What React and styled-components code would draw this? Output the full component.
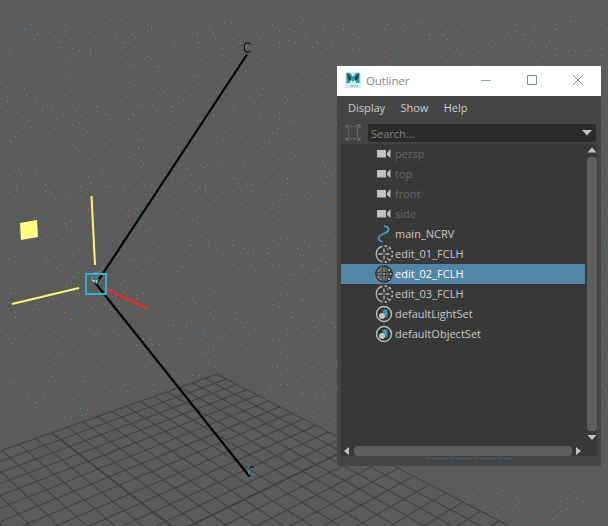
import React from 'react';
import styled, { createGlobalStyle, css } from 'styled-components';

const Global = createGlobalStyle`
  * { box-sizing: border-box; }
  body { margin: 0; background: #5b5b5b; overflow: hidden; }
`;

const Viewport = styled.main`
  position: relative;
  width: 608px;
  height: 526px;
  overflow: hidden;
  background: #5b5b5b;
  font-family: 'Open Sans', 'Noto Sans', sans-serif;
`;

const Scene = styled.svg`
  display: block;
`;

const Window = styled.section`
  position: absolute;
  left: 337px;
  top: 66px;
  width: 264px;
  height: 400px;
  display: flex;
  flex-direction: column;
  background: #444;
`;

const TitleBar = styled.header`
  height: 30px;
  flex: none;
  display: flex;
  align-items: center;
  padding: 0 17px 2px 8px;
  background: #fff;
`;

const Title = styled.h1`
  flex: 1;
  margin: 2px 0 0 5px;
  font-size: 11.5px;
  font-weight: 400;
  line-height: 16px;
  letter-spacing: -0.1px;
  color: #858585;
`;

const WindowButtons = styled.div`
  display: flex;
  gap: 34px;
  svg { display: block; }
`;

const MenuBar = styled.nav`
  height: 28px;
  flex: none;
  display: flex;
  gap: 15.3px;
  padding: 4px 11px 0;
  font-size: 11px;
  line-height: 16px;
  color: #cfcfcf;
`;

const SearchBar = styled.div`
  height: 20px;
  flex: none;
  display: flex;
  align-items: flex-start;
  padding: 0 5px 0 8px;
`;

const SearchField = styled.div`
  flex: 1;
  height: 18px;
  margin-left: 7px;
  padding: 0 3px;
  display: flex;
  align-items: center;
  justify-content: space-between;
  border-radius: 2px;
  background: #2b2b2b;
  color: #858585;
  font-size: 11px;
  line-height: 18px;
  span { padding-top: 2px; }
`;

const Panel = styled.div`
  height: 312px;
  flex: none;
  margin: 0 4px;
  display: grid;
  grid-template-columns: 244px 12px;
  grid-template-rows: 300px 12px;
  background: #383838;
`;

const List = styled.ul`
  margin: 0;
  padding: 0;
  list-style: none;
`;

const Row = styled.li`
  height: 20px;
  display: flex;
  align-items: center;
  padding-left: 34px;
  gap: 2px;
  font-size: 11px;
  line-height: 20px;
  letter-spacing: 0.02px;
  white-space: nowrap;
  color: ${(p) => (p.$dim ? '#686868' : '#c8c8c8')};
  ${(p) => p.$selected && css`
    background: #5285a6;
    color: #fff;
  `}
  svg { flex: none; }
`;

const VerticalScroll = styled.div`
  display: flex;
  flex-direction: column;
  align-items: center;
  padding: 3px 0 0 2px;
  gap: 4px;
`;

const HorizontalScroll = styled.div`
  grid-column: 1 / -1;
  display: flex;
  align-items: center;
  padding: 2px 0 0 3px;
  gap: 4px;
`;

const Thumb = styled.div`
  flex: none;
  width: ${(p) => p.$width}px;
  height: ${(p) => p.$height}px;
  border-radius: 4px;
  background: #5e5e5e;
`;

const Grip = styled.div`
  width: 86px;
  margin: 2px 0 0 89px;
  height: 1px;
  background: repeating-linear-gradient(90deg, #4986ae 0 1px, #444 1px 3px);
`;

const Arrow = ({ points, width, height }) => (
  <svg width={width} height={height} viewBox={`0 0 ${width} ${height}`}>
    <polygon points={points} fill="#bcc7c2" />
  </svg>
);

/* Ground plane in perspective: 24 x 24 cells, heavier lines on both axes. */
const project = (u, v) => {
  const w = 1 - 0.1605 * u - 0.1334 * v;
  return [(217 + 81 * u - 172.2 * v) / w, (374 + 0.25 * u + v) / w];
};

const segment = (a, b) => {
  const [x1, y1] = project(...a);
  const [x2, y2] = project(...b);
  return `M${x1.toFixed(1)} ${y1.toFixed(1)}L${x2.toFixed(1)} ${y2.toFixed(1)}`;
};

const steps = Array.from({ length: 25 }, (_, i) => i).filter((i) => i !== 12);
const gridPath = steps
  .map((i) => segment([i / 12, 0], [i / 12, 2]) + segment([0, i / 12], [2, i / 12]))
  .join('');
const axisPath = segment([1, 0], [1, 2]) + segment([0, 1], [2, 1]);

const speckles = (() => {
  let seed = 41;
  const random = () => {
    seed = (seed * 16807) % 2147483647;
    return seed / 2147483647;
  };
  const paths = ['', '', ''];
  for (let y = 19; y < 522; y += 9) {
    for (let x = 6; x < 602; x += 9) {
      const px = x + Math.floor(random() * 7);
      const py = y + Math.floor(random() * 7);
      const tone = Math.floor(random() * 3);
      const limit = px < 217 ? 372 + (217 - px) * 0.35 : 372 + (px - 217) * 0.52;
      const corner = px > 435 && py > 485 && py < limit + 40;
      if (py < limit - 3 && (py < 445 || corner)) {
        paths[tone] += `M${px} ${py}h1v1h-1z`;
      }
    }
  }
  return paths;
})();

const SceneDrawing = () => (
  <Scene width="608" height="526" viewBox="0 0 608 526">
    <g shapeRendering="crispEdges">
      <path d={speckles[0]} fill="#7f807d" />
      <path d={speckles[1]} fill="#a8744a" />
      <path d={speckles[2]} fill="#448fbb" />
    </g>
    <path d={gridPath} stroke="#424242" strokeWidth="1.1" fill="none" />
    <path d={axisPath} stroke="#404040" strokeWidth="1.8" fill="none" />
    <path d="M247 54.500L96 284L249.500 476.500" stroke="#050505" strokeWidth="2.2" fill="none" />
    <path d="M250 44.500l-1.500-1.500h-2l-2 2v5l2 2h2l1.500-1.500" stroke="#111" strokeWidth="1.3" fill="none" />
    <path d="M250.500 45.500l-2-1.500h-2l-1 1.500v4l2 1.500h2" stroke="#4383a7" strokeWidth=".7" fill="none" />
    <path d="M254 467.500l-3-1-3 2M250 475l2-1" stroke="#151515" strokeWidth="1.2" fill="none" />
    <path d="M249 467l-1 2 2 2-2 2 3 2 4-1" stroke="#4aa9d8" strokeWidth="1.2" strokeDasharray="1 1" fill="none" />
    <path d="M20 223l17-3 1 17-17 3z" fill="#ffff83" />
    <path d="M91.500 196L95 265M12 304L79 288" stroke="#fbf676" strokeWidth="2" fill="none" />
    <path d="M107 289.500L147 308" stroke="#f52822" strokeWidth="2" fill="none" />
    <rect x="86" y="274" width="20" height="20" fill="none" stroke="#30b5d1" strokeWidth="2" />
    <path d="M93 273h6M92 276v4l3 1 3-1-2 4M95 277h3" stroke="#34bbd5" strokeWidth="1.2" fill="none" />
    <path d="M93 280l1 2M97 281l-1 1" stroke="#efe64d" strokeWidth="1.2" />
  </Scene>
);

const MayaLogo = () => (
  <svg width="16" height="16" viewBox="0 0 16 16">
    <path d="M0 0h16v16H0z" fill="#c9edf1" />
    <path d="M1.500 1h3.500L8 5l3-4h3.500v10H11V6L8 10 5 6v5H1.500z" fill="#3794a6" />
    <path d="M2 1l4 4v4L3 7zM14 1l-4 4v4l3-2z" fill="#1b4957" />
    <path d="M6 14h7" stroke="#54a3b0" strokeDasharray="2 1" />
  </svg>
);

const FrameIcon = () => (
  <svg width="16" height="17" viewBox="0 0 16 17">
    <path d="M3.500 3v11M12.500 3v11M4 2.500h8M4 14.500h8" fill="none" stroke="#656b6e" strokeWidth="1.2" strokeDasharray="3 1" />
    <path d="M1 4V1h3M12 1h3v3M15 13v3h-3M4 16H1v-3M1 1l3 3M15 1l-3 3M1 16l3-3M15 16l-3-3" stroke="#707477" fill="none" />
  </svg>
);

const CameraIcon = () => (
  <svg width="18" height="18" viewBox="0 0 18 18">
    <path d="M2 5h9v7.500H2zM12 8l3.500-4v9L12 10z" fill="#bcbcbe" />
    <path d="M3 6.500h1M6 6.500h1M9 6.500h1M4 8.500h1M7 8.500h1M3 10.500h1M6 10.500h1M9 10.500h1" stroke="#dedede" />
  </svg>
);

const CurveIcon = () => (
  <svg width="18" height="18" viewBox="0 0 18 18">
    <path d="M9 1c4 .5 6 3 3.500 5.500C10 9 3 9.500 3.500 13.500c.2 1.500 2 3 4 3" fill="none" stroke="#469fc1" strokeWidth="1.8" />
  </svg>
);

const ClusterIcon = ({ selected }) =>
  selected ? (
    <svg width="18" height="18" viewBox="0 0 18 18">
      <circle cx="9" cy="9" r="8" fill="#596369" stroke="#37393a" strokeWidth="2" />
      <path d="M9 2.500v13M2.500 9h13" stroke="#303335" strokeWidth="3" />
      <path d="M9 2.500v13M2.500 9h13" stroke="#b0a99f" strokeWidth="1.2" />
      <path d="M12.500 3.500h3v3h-3zM7.500 7.500h3v3h-3zM14 7.500h3v3h-3zM12.500 12.500h3v3h-3z" fill="#a5a9a9" stroke="#303335" />
      <path d="M2.500 7a7 7 0 0 1 4-4M2.500 11a7 7 0 0 0 4 4" stroke="#aaa9a5" fill="none" />
    </svg>
  ) : (
    <svg width="18" height="18" viewBox="0 0 18 18">
      <path d="M7.500 1.200a8 8 0 0 0 0 15.600" fill="none" stroke="#b9b9b9" strokeWidth="1.4" />
      <path d="M9.500 1a8 8 0 0 1 0 16" fill="none" stroke="#b9b9b9" strokeWidth="1.6" strokeDasharray="2.500 2" />
      <path d="M9 3.500v4M9 10.500v4M3.500 9h4M10.500 9h4" stroke="#bdbdbd" strokeWidth="1.3" />
      <path d="M8.500 9h1" stroke="#999" />
      <path d="M12 4.500h1.500M12 13.500h1.500" stroke="#b9b9b9" strokeWidth="1.500" />
    </svg>
  );

const SetIcon = () => (
  <svg width="18" height="18" viewBox="0 0 18 18">
    <circle cx="9" cy="9" r="7.500" fill="#323232" stroke="#c1c1c1" strokeWidth="1.4" />
    <path d="M7.500 4.500h5v8h-3l-2-4z" fill="#2b8aaa" />
    <path d="M9 5l3 3M10 8l2 2" stroke="#54bed1" />
    <circle cx="7" cy="11" r="3" fill="#c6c4c7" />
  </svg>
);

const nodes = [
  { name: 'persp', Icon: CameraIcon, dim: true },
  { name: 'top', Icon: CameraIcon, dim: true },
  { name: 'front', Icon: CameraIcon, dim: true },
  { name: 'side', Icon: CameraIcon, dim: true },
  { name: 'main_NCRV', Icon: CurveIcon },
  { name: 'edit_01_FCLH', Icon: ClusterIcon },
  { name: 'edit_02_FCLH', Icon: ClusterIcon, selected: true },
  { name: 'edit_03_FCLH', Icon: ClusterIcon },
  { name: 'defaultLightSet', Icon: SetIcon },
  { name: 'defaultObjectSet', Icon: SetIcon },
];

export default function App() {
  return (
    <>
      <Global />
      <Viewport>
        <SceneDrawing />
        <Window>
          <TitleBar>
            <MayaLogo />
            <Title>Outliner</Title>
            <WindowButtons>
              <svg width="12" height="12" viewBox="0 0 12 12"><path d="M1 6.500h10" stroke="#87aaa4" /></svg>
              <svg width="12" height="12" viewBox="0 0 12 12"><path d="M1.500 1.500h9v9h-9z" fill="none" stroke="#77918c" /></svg>
              <svg width="12" height="12" viewBox="0 0 12 12"><path d="M1 1l10 10M11 1L1 11" stroke="#77918c" /></svg>
            </WindowButtons>
          </TitleBar>
          <MenuBar>
            <span>Display</span>
            <span>Show</span>
            <span>Help</span>
          </MenuBar>
          <SearchBar>
            <FrameIcon />
            <SearchField>
              <span>Search...</span>
              <Arrow width={12} height={6} points="1,0 11,0 6,5.5" />
            </SearchField>
          </SearchBar>
          <Panel>
            <List>
              {nodes.map(({ name, Icon, dim, selected }) => (
                <Row key={name} $dim={dim} $selected={selected}>
                  <Icon selected={selected} />
                  <span>{name}</span>
                </Row>
              ))}
            </List>
            <VerticalScroll>
              <Arrow width={10} height={6} points="0.5,5.5 5,0.5 9.5,5.5" />
              <Thumb $width={10} $height={274} />
              <Arrow width={10} height={6} points="0.5,0 9.5,0 5,5" />
            </VerticalScroll>
            <HorizontalScroll>
              <Arrow width={6} height={10} points="5,1 0,5 5,9" />
              <Thumb $width={218} $height={10} />
              <Arrow width={6} height={10} points="0,1 5,5 0,9" />
            </HorizontalScroll>
          </Panel>
          <Grip />
        </Window>
      </Viewport>
    </>
  );
}
